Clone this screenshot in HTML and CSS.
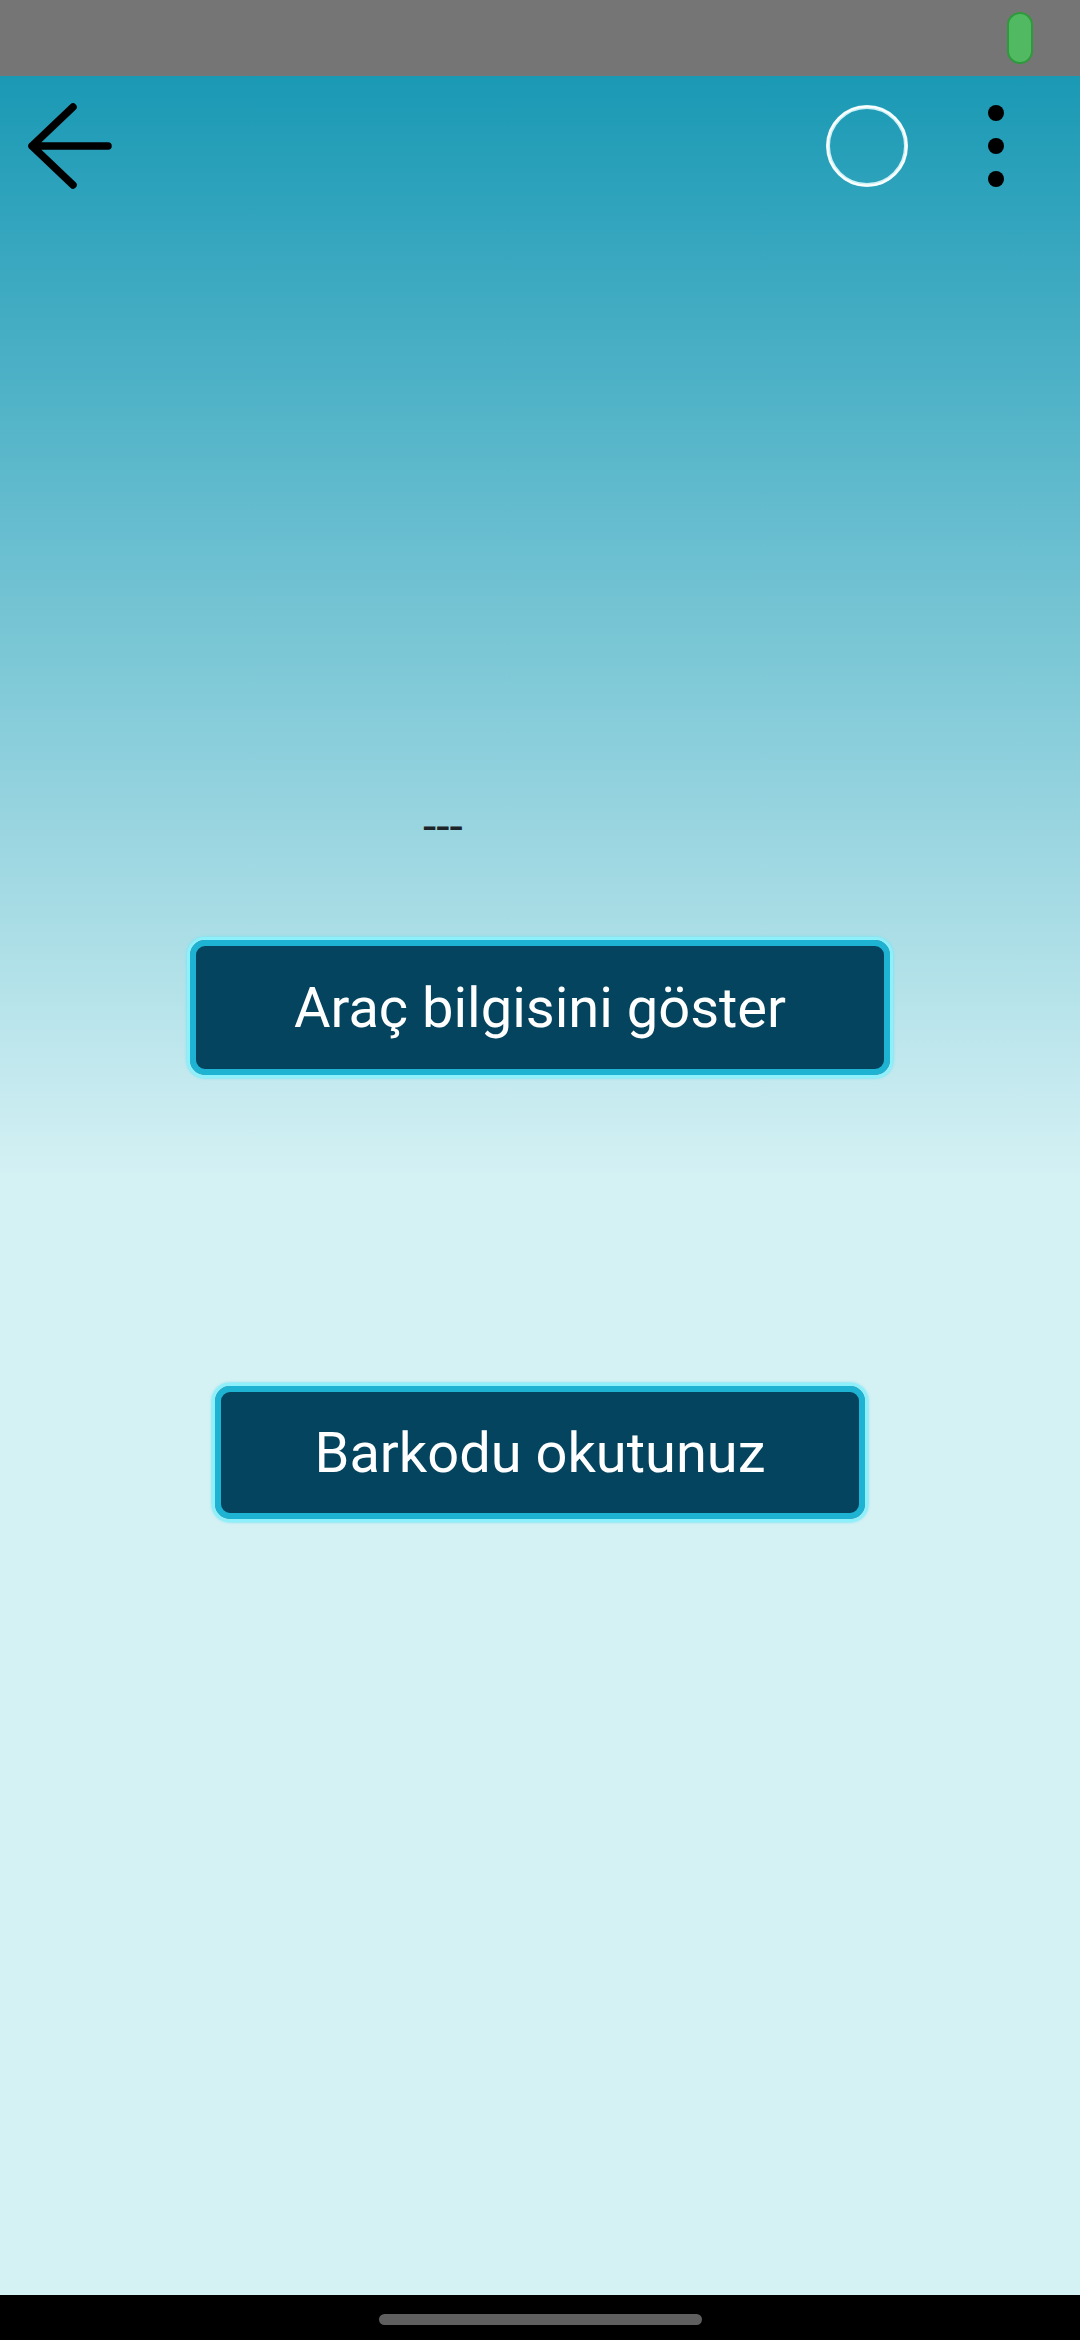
FILE: index.html
```html
<!DOCTYPE html>
<html lang="tr">
<head>
<meta charset="utf-8">
<title>Araç bilgisi</title>
<link rel="stylesheet" href="styles.css">
</head>
<body>
<div class="phone">
  <div class="status">
    <span class="pill"></span>
  </div>
  <main class="screen">
    <header class="toolbar">
      <svg class="back" width="100" height="100" viewBox="0 0 100 100" aria-label="Geri">
        <path d="M88 50 H12 M53 11 L12 50 L53 89" fill="none" stroke="#000" stroke-width="7.5" stroke-linecap="round" stroke-linejoin="round"/>
      </svg>
      <div class="spacer"></div>
      <svg class="ring" width="90" height="90" viewBox="0 0 90 90">
        <circle cx="45" cy="45" r="39" fill="none" stroke="#c9f1f6" stroke-width="4"/>
        <circle cx="45" cy="45" r="39.5" fill="none" stroke="#ffffff" stroke-width="2"/>
      </svg>
      <svg class="more" width="24" height="90" viewBox="0 0 24 90">
        <circle cx="12" cy="12" r="8" fill="#000"/>
        <circle cx="12" cy="45" r="8" fill="#000"/>
        <circle cx="12" cy="78" r="8" fill="#000"/>
      </svg>
    </header>
    <p class="label">---</p>
    <button class="btn btn-info">Araç bilgisini göster</button>
    <button class="btn btn-scan">Barkodu okutunuz</button>
  </main>
  <div class="navbar"><span class="handle"></span></div>
</div>
</body>
</html>
```

FILE: styles.css
```css
* { box-sizing: border-box; }
html, body { margin: 0; padding: 0; }
body {
  width: 1080px;
  height: 2340px;
  overflow: hidden;
  font-family: Roboto, "Noto Sans", "Liberation Sans", sans-serif;
}
.phone {
  display: flex;
  flex-direction: column;
  width: 1080px;
  height: 2340px;
}
.status {
  height: 76px;
  flex: none;
  background: #757575;
  display: flex;
  justify-content: flex-end;
  align-items: flex-start;
  padding: 12px 47px 0 0;
}
.pill {
  width: 26px;
  height: 52px;
  border-radius: 13px;
  background: #51b962;
  border: 2px solid #2f9a3c;
}
.screen {
  flex: 1;
  display: flex;
  flex-direction: column;
  align-items: center;
  background: linear-gradient(180deg, #1a99b5 0px, #d4f1f4 1100px, #d4f1f4 100%);
}
.toolbar {
  align-self: stretch;
  height: 140px;
  display: flex;
  align-items: center;
  padding: 0 72px 0 20px;
}
.spacer { flex: 1; }
.back { display: block; }
.ring { display: block; margin-right: 72px; }
.more { display: block; }
.label {
  align-self: flex-start;
  margin: 583px 0 0 423px;
  font-size: 48px;
  line-height: 56px;
  color: #1c2427;
}
.btn {
  display: flex;
  align-items: center;
  justify-content: center;
  height: 141px;
  padding: 0;
  border: 3px solid #8ef0fb;
  border-radius: 18px;
  background: #05445e;
  box-shadow: inset 0 0 0 6px #1fb3d3, 0 0 2px 1px rgba(120, 230, 245, 0.7);
  color: #ffffff;
  font-family: Roboto, "Noto Sans", "Liberation Sans", sans-serif;
  font-size: 56px;
  font-weight: 400;
}
.btn-info {
  width: 706px;
  margin-top: 82px;
}
.btn-scan {
  width: 656px;
  height: 139px;
  margin-top: 305px;
}
.navbar {
  height: 45px;
  flex: none;
  background: #000;
  display: flex;
  justify-content: center;
  padding-top: 19px;
}
.handle {
  width: 323px;
  height: 11px;
  border-radius: 6px;
  background: #5f5f5f;
}
```
